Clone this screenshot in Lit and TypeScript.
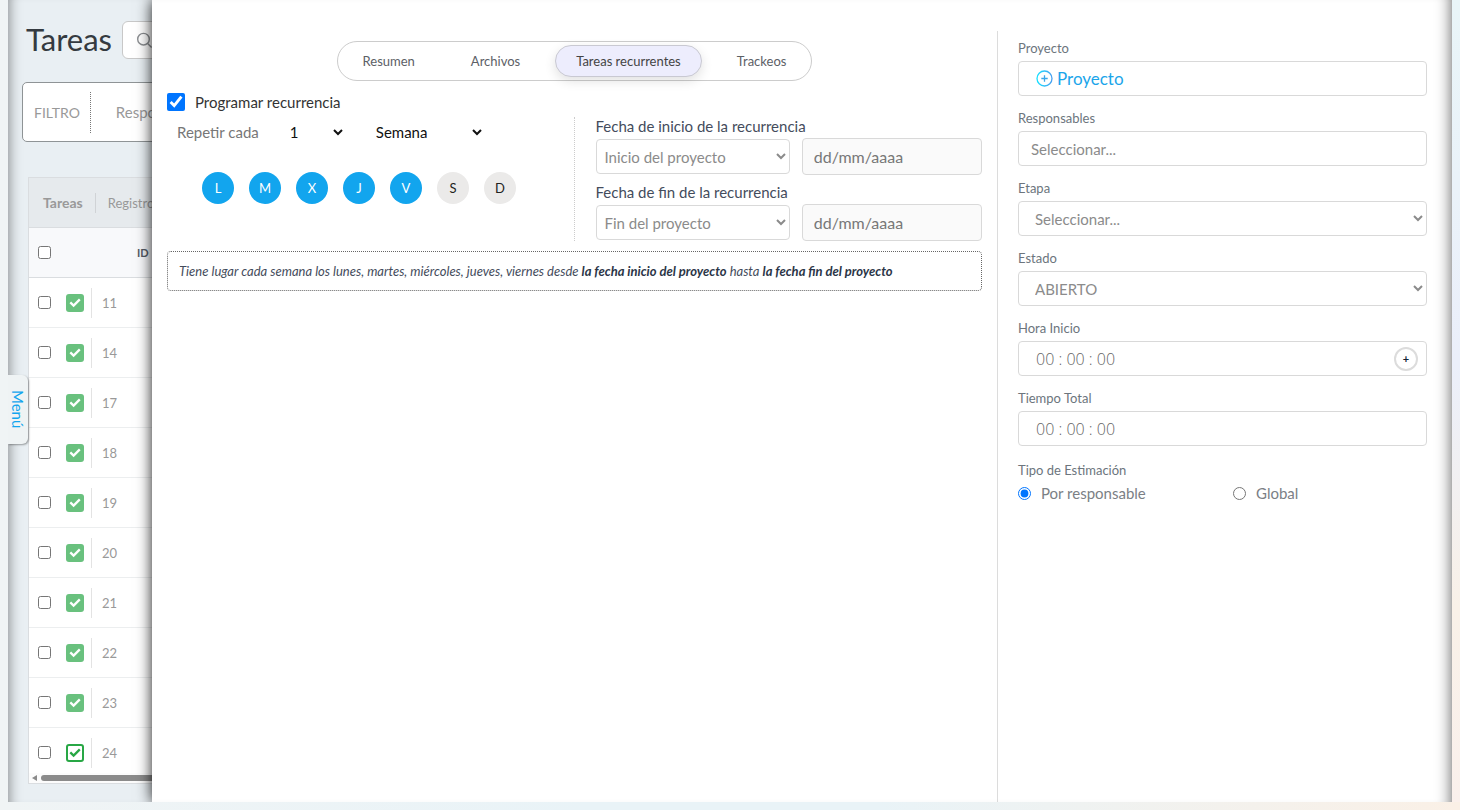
import { LitElement, html, css, svg } from "lit";
import { customElement, property } from "lit/decorators.js";

const checkPath = svg`<path d="M4.3 8.4 7.6 11.6 13.8 5.4" fill="none" stroke="currentColor" stroke-width="2.3" />`;

@customElement("task-list")
class TaskList extends LitElement {
  static styles = css`
    :host {
      display: flex;
      flex-direction: column;
      box-sizing: border-box;
      height: 100%;
      padding: 20px 20px 18px 14px;
      background: #e9eff3;
    }
    .title-bar {
      display: flex;
      align-items: end;
      gap: 10px;
      height: 39px;
      padding-left: 4px;
    }
    h1 {
      margin: 0;
      font-size: 31px;
      line-height: 40px;
      font-weight: 400;
      color: #343a40;
    }
    .search {
      display: flex;
      align-items: center;
      box-sizing: border-box;
      width: 260px;
      height: 38px;
      padding: 0 13px;
      border: 1px solid #c8c8c8;
      border-radius: 6px;
      background: #fff;
      color: #8a8d90;
    }
    .search input {
      min-width: 0;
      flex: 1;
      border: 0;
      outline: 0;
      font: inherit;
    }
    .filter {
      display: flex;
      align-items: center;
      box-sizing: border-box;
      height: 60px;
      margin-top: 23px;
      padding-left: 11px;
      border: 1px solid #8f9496;
      border-radius: 5px;
      background: #fff;
      color: #999;
      font-size: 14px;
    }
    .filter-name {
      padding-right: 10px;
      line-height: 41px;
      border-right: 1px dotted #777;
    }
    .filter-item {
      padding-left: 25px;
      font-size: 15px;
    }
    .card {
      display: flex;
      flex-direction: column;
      flex: 1;
      min-height: 0;
      margin: 35px 0 0 6px;
      border: 1px solid #dadde0;
      background: #fff;
      overflow: hidden;
    }
    .tabs {
      display: flex;
      align-items: center;
      flex: none;
      height: 49px;
      padding-left: 14px;
      background: #e6eaed;
      font-size: 13px;
      color: #999;
    }
    .tabs button {
      padding: 0 12px 0 0;
      border: 0;
      background: none;
      font: inherit;
      line-height: 20px;
      color: inherit;
    }
    .tabs .current {
      font-size: 14px;
      font-weight: 700;
    }
    .tabs button + button {
      padding-left: 12px;
      border-left: 1px solid #d0d3d6;
    }
    .rows {
      flex: 1;
      min-height: 0;
      overflow: hidden;
    }
    table {
      width: 100%;
      border-spacing: 0;
      font-size: 13px;
      color: #999;
    }
    th,
    td {
      box-sizing: border-box;
      height: 50px;
      padding: 0;
      border-bottom: 1px solid #eceeef;
      text-align: left;
    }
    th {
      height: 51px;
      background: #f8f9fb;
      border-top: 1px solid #dadde0;
      border-bottom-color: #dadde0;
      font-size: 11px;
      color: #555b66;
    }
    th.id {
      padding-left: 46px;
    }
    .pick {
      width: 37px;
      padding-left: 9px;
    }
    .pick input {
      display: block;
      margin: 0;
      width: 13px;
      height: 13px;
    }
    .state {
      width: 25px;
    }
    .done,
    .open {
      display: block;
      box-sizing: border-box;
      width: 18px;
      height: 18px;
      padding: 0;
      border: 0;
      border-radius: 3px;
      background: #69c17e;
      color: #fff;
    }
    .open {
      background: #fff;
      color: #28a745;
      box-shadow: inset 0 0 0 2px #28a745;
    }
    .done svg,
    .open svg {
      display: block;
    }
    .number {
      display: block;
      padding-left: 10px;
      line-height: 30px;
      border-left: 1px solid #e3e3e3;
    }
    .scroll {
      display: flex;
      align-items: center;
      flex: none;
      gap: 4px;
      height: 10px;
      padding-left: 3px;
      background: #fcfcfc;
    }
    .arrow {
      border: 3px solid transparent;
      border-left: 0;
      border-right: 5px solid #8b8b8b;
    }
    .thumb {
      width: 70%;
      height: 6px;
      border-radius: 3px;
      background: #8b8b8b;
    }
  `;

  tasks = [11, 14, 17, 18, 19, 20, 21, 22, 23, 24];

  render() {
    return html`
      <div class="title-bar">
        <h1>Tareas</h1>
        <label class="search">
          <svg width="17" height="17" viewBox="0 0 17 17" fill="none" stroke="currentColor" stroke-width="1.4">
            <circle cx="7.5" cy="7.2" r="5.8" />
            <path d="m11.6 11.4 4 4" />
          </svg>
          <input type="search" aria-label="Buscar" />
        </label>
      </div>
      <div class="filter">
        <span class="filter-name">FILTRO</span>
        <span class="filter-item">Responsables</span>
      </div>
      <section class="card">
        <div class="tabs">
          <button class="current">Tareas</button>
          <button>Registros</button>
        </div>
        <div class="rows">
          <table>
            <thead>
              <tr>
                <th class="pick"><input type="checkbox" aria-label="Todas" /></th>
                <th class="state"></th>
                <th class="id">ID</th>
              </tr>
            </thead>
            <tbody>
              ${this.tasks.map(
                (id) => html`
                  <tr>
                    <td class="pick"><input type="checkbox" aria-label=${`Tarea ${id}`} /></td>
                    <td class="state">
                      <button class=${id === 24 ? "open" : "done"} aria-label="Completar">
                        <svg width="18" height="18" viewBox="0 0 18 18">${checkPath}</svg>
                      </button>
                    </td>
                    <td><span class="number">${id}</span></td>
                  </tr>
                `
              )}
            </tbody>
          </table>
        </div>
        <div class="scroll"><span class="arrow"></span><span class="thumb"></span></div>
      </section>
    `;
  }
}

@customElement("recurrence-form")
class RecurrenceForm extends LitElement {
  static styles = css`
    :host {
      display: block;
      padding: 41px 15px 0;
    }
    .tabs {
      display: flex;
      justify-content: space-between;
      box-sizing: border-box;
      width: fit-content;
      height: 40px;
      margin: 0 auto;
      padding: 3px 4px;
      border: 1px solid #ccc;
      border-radius: 20px;
      gap: 14px;
    }
    .tabs button {
      height: 32px;
      padding: 0 20px;
      border: 1px solid transparent;
      border-radius: 16px;
      background: none;
      font: inherit;
      font-size: 13px;
      color: #5c6066;
    }
    .tabs .current {
      border-color: #c9c9d2;
      background: #ededfd;
      color: #444;
      box-shadow: 0 4px 12px rgba(0, 0, 0, 0.12);
    }
    .toggle {
      display: flex;
      align-items: center;
      gap: 10px;
      margin-top: 11px;
      line-height: 20px;
      color: #333;
    }
    .toggle input {
      width: 18px;
      height: 18px;
      margin: 0;
      accent-color: #0075ff;
    }
    .halves {
      display: grid;
      grid-template-columns: 1fr 1fr;
      margin-top: 5px;
    }
    .every {
      border-right: 1px dotted #ccc;
    }
    .repeat {
      display: flex;
      align-items: center;
      height: 30px;
      padding-left: 10px;
      color: #777;
    }
    .repeat select {
      height: 30px;
      padding: 0;
      border: 0;
      background: transparent;
      font: inherit;
      color: #111;
    }
    .count {
      width: 60px;
      margin-left: 27px;
    }
    .unit {
      width: 113px;
      margin-left: 26px;
    }
    .days {
      display: flex;
      gap: 15px;
      margin-top: 25px;
      padding-left: 35px;
    }
    .days button {
      width: 32px;
      height: 32px;
      padding: 0;
      border: 0;
      border-radius: 50%;
      background: #ebeae9;
      font: inherit;
      font-size: 13px;
      color: #222;
    }
    .days .on {
      background: #12a5ee;
      color: #fff;
    }
    .dates {
      display: grid;
      grid-template-columns: 194fr 180fr;
      column-gap: 12px;
      align-items: center;
      padding-left: 21px;
    }
    .dates label {
      grid-column: 1 / -1;
      height: 21px;
      line-height: 19px;
      color: #444c5c;
    }
    .dates select,
    .dates input {
      box-sizing: border-box;
      width: 100%;
      min-width: 0;
      height: 35px;
      padding: 0 4px;
      border: 1px solid #d9d9d9;
      border-radius: 4px;
      background: #fff;
      font: inherit;
      color: #8b8b8b;
    }
    .dates input {
      height: 37px;
      padding: 0 11px;
      background: #fafafa;
      font-size: 16px;
    }
    .dates input::placeholder {
      color: #777;
    }
    .dates .second {
      margin-top: 8px;
      height: 21px;
    }
    .summary {
      margin: 10px 0 0;
      padding: 9px 11px;
      border: 1px dotted #666;
      border-radius: 4px;
      font-size: 13px;
      line-height: 20px;
      font-style: italic;
      color: #444c5c;
    }
    .summary b {
      color: #2b3547;
    }
  `;

  render() {
    return html`
      <nav class="tabs">
        <button>Resumen</button>
        <button>Archivos</button>
        <button class="current">Tareas recurrentes</button>
        <button>Trackeos</button>
      </nav>
      <label class="toggle"><input type="checkbox" checked />Programar recurrencia</label>
      <div class="halves">
        <div class="every">
          <div class="repeat">
            <label for="count">Repetir cada</label>
            <select id="count" class="count"><option>1</option></select>
            <select class="unit" aria-label="Periodo"><option>Semana</option></select>
          </div>
          <div class="days">
            ${["L", "M", "X", "J", "V", "S", "D"].map(
              (day, i) => html`<button class=${i < 5 ? "on" : "off"}>${day}</button>`
            )}
          </div>
        </div>
        <div class="dates">
          <label for="start">Fecha de inicio de la recurrencia</label>
          <select id="start"><option>Inicio del proyecto</option></select>
          <input type="text" placeholder="dd/mm/aaaa" aria-label="Fecha de inicio" />
          <label class="second" for="end">Fecha de fin de la recurrencia</label>
          <select id="end"><option>Fin del proyecto</option></select>
          <input type="text" placeholder="dd/mm/aaaa" aria-label="Fecha de fin" />
        </div>
      </div>
      <p class="summary">
        Tiene lugar cada semana los lunes, martes, miércoles, jueves, viernes desde
        <b>la fecha inicio del proyecto</b> hasta <b>la fecha fin del proyecto</b>
      </p>
    `;
  }
}

@customElement("task-details")
class TaskDetails extends LitElement {
  static styles = css`
    :host {
      display: block;
      box-sizing: border-box;
      margin-top: 31px;
      padding: 8px 25px 0 20px;
      border-left: 1px solid #dcdcdc;
    }
    .field {
      margin-bottom: 13px;
    }
    .name {
      display: block;
      margin-bottom: 4px;
      font-size: 13px;
      line-height: 18px;
      color: #6c757d;
    }
    .box {
      display: flex;
      align-items: center;
      box-sizing: border-box;
      width: 100%;
      height: 35px;
      padding: 0 12px;
      border: 1px solid #d9d9d9;
      border-radius: 4px;
      background: #fff;
      font: inherit;
      color: #8b8b8b;
    }
    input.box::placeholder {
      color: #8b8b8b;
    }
    .add {
      gap: 4px;
      padding-left: 17px;
      font-size: 17px;
      color: #1ba5ea;
    }
    .time {
      padding: 0 8px 0 17px;
    }
    .time input {
      flex: 1;
      min-width: 0;
      padding: 0;
      border: 0;
      outline: 0;
      background: none;
      font: 300 16px "Open Sans", sans-serif;
      color: #666;
    }
    .plus {
      width: 24px;
      height: 24px;
      padding: 0;
      border: 2px solid #dcdcdc;
      border-radius: 50%;
      background: #fff;
      font: 700 11px Lato, sans-serif;
      color: #123;
    }
    fieldset {
      display: grid;
      grid-template-columns: 215px 1fr;
      margin: 15px 0 0;
      padding: 0;
      border: 0;
      color: #7b8085;
    }
    legend {
      padding: 0;
    }
    fieldset .name {
      margin-bottom: 2px;
    }
    .choice {
      display: flex;
      align-items: center;
      gap: 10px;
      line-height: 24px;
    }
    .choice input {
      width: 13px;
      height: 13px;
      margin: 0;
      accent-color: #0075ff;
    }
    select.box {
      display: block;
      padding: 0 0 0 12px;
    }
  `;

  render() {
    return html`
      <div class="field">
        <label class="name" for="project">Proyecto</label>
        <button id="project" class="box add">
          <svg width="17" height="17" viewBox="0 0 17 17" fill="none">
            <defs>
              <linearGradient id="ring" x1="0" x2="1">
                <stop offset="0" stop-color="#18e0ff" />
                <stop offset="1" stop-color="#4a9ff0" />
              </linearGradient>
            </defs>
            <circle cx="8.5" cy="8.5" r="7.5" stroke="url(#ring)" stroke-width="1.3" />
            <path d="M8.5 5.3v6.4M5.3 8.5h6.4" stroke="#3aa6ea" stroke-width="1.3" />
          </svg>
          Proyecto
        </button>
      </div>
      <div class="field">
        <label class="name" for="people">Responsables</label>
        <input id="people" class="box" type="text" placeholder="Seleccionar..." />
      </div>
      <div class="field">
        <label class="name" for="stage">Etapa</label>
        <select id="stage" class="box"><option>Seleccionar...</option></select>
      </div>
      <div class="field">
        <label class="name" for="status">Estado</label>
        <select id="status" class="box"><option>ABIERTO</option></select>
      </div>
      <div class="field">
        <label class="name" for="from">Hora Inicio</label>
        <div class="box time">
          <input id="from" type="text" value="00 : 00 : 00" />
          <button class="plus" aria-label="Añadir hora">+</button>
        </div>
      </div>
      <div class="field">
        <label class="name" for="total">Tiempo Total</label>
        <div class="box time"><input id="total" type="text" value="00 : 00 : 00" /></div>
      </div>
      <fieldset>
        <legend class="name">Tipo de Estimación</legend>
        <label class="choice"><input type="radio" name="estimate" checked />Por responsable</label>
        <label class="choice"><input type="radio" name="estimate" />Global</label>
      </fieldset>
    `;
  }
}

@customElement("app-root")
class AppRoot extends LitElement {
  static styles = css`
    :host {
      display: block;
      box-sizing: border-box;
      height: 100vh;
      padding: 0 8px 8px;
      background:
        linear-gradient(90deg, transparent 60%, #faf0e6) bottom / 100% 8px no-repeat,
        linear-gradient(#e9f5f8, #ebeffa 45%, #f9f1e8 75%, #faf0ec) right / 8px 100% no-repeat,
        linear-gradient(90deg, #f0f4f5, #e9f3f7 40%);
      font-family: Lato, sans-serif;
      font-size: 15px;
    }
    .frame {
      position: relative;
      height: 100%;
      overflow: hidden;
    }
    .frame::after {
      content: "";
      position: absolute;
      inset: 0;
      pointer-events: none;
      box-shadow:
        inset 14px 0 14px -14px rgba(0, 0, 0, 0.5),
        inset -16px 0 16px -16px rgba(0, 0, 0, 0.65);
    }
    .menu {
      position: absolute;
      z-index: 1;
      left: 0;
      top: 375px;
      width: 20px;
      height: 69px;
      padding: 0;
      border: 0;
      border-radius: 0 6px 6px 0;
      background: #eff3f4;
      box-shadow: 1px 1px 2px rgba(0, 0, 0, 0.35);
      writing-mode: vertical-rl;
      font: inherit;
      line-height: 20px;
      color: #12a5ee;
    }
    .panel {
      position: absolute;
      inset: 0 0 0 144px;
      display: grid;
      grid-template-columns: 65fr 35fr;
      background: #fff;
      box-shadow: 0 0 14px rgba(0, 0, 0, 0.9);
    }
  `;

  @property() language = "es";

  render() {
    return html`
      <main class="frame" lang=${this.language}>
        <task-list></task-list>
        <section class="panel">
          <recurrence-form></recurrence-form>
          <task-details></task-details>
        </section>
        <button class="menu">Menú</button>
      </main>
    `;
  }
}
